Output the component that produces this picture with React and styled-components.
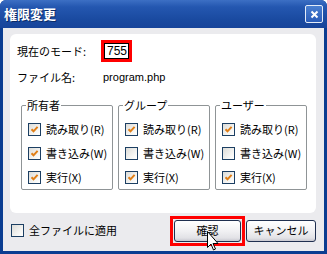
import React from "react"
import styled, { createGlobalStyle } from "styled-components"

const GlobalStyle = createGlobalStyle`
    html, body {
        margin: 0;
        padding: 0;
        background: #ffffff;
    }
    body {
        font-family: "Noto Sans CJK JP", "Liberation Sans", sans-serif;
        font-size: 11px;
        color: #000000;
    }
`

const Window = styled.div`
    position: relative;
    width: 327px;
    height: 254px;
    box-sizing: border-box;
    display: flex;
    flex-direction: column;
    background: #0b3d91;
    border-radius: 6px 6px 0 0;
    overflow: hidden;
`

const TitleBar = styled.div`
    height: 28px;
    flex: none;
    display: flex;
    align-items: center;
    justify-content: space-between;
    padding: 0 3px 0 4px;
    background: linear-gradient(#3c6fc4 0%, #2457b0 25%, #1a4aa0 70%, #17449a 100%);
`

const Title = styled.span`
    color: #ffffff;
    font-weight: bold;
    font-size: 13px;
    line-height: 14px;
    text-shadow: 1px 1px 0 #0a2a66;
`

const CloseButton = styled.div`
    width: 16px;
    height: 16px;
    margin-right: 1px;
    border: 1px solid #e4ecf8;
    border-radius: 2px;
    background: linear-gradient(#4a7fd0, #2a5cb8);
    display: flex;
    align-items: center;
    justify-content: center;
`

const Body = styled.div`
    flex: 1;
    margin: 0 3px 3px 3px;
    background: #ebebee;
    display: flex;
    flex-direction: column;
    padding: 6px 8px 0 7px;
`

const Panel = styled.div`
    height: 179px;
    box-sizing: border-box;
    background: #ffffff;
    border-radius: 6px;
    padding: 6px 10px 0 7px;
    display: flex;
    flex-direction: column;
`

const InfoRow = styled.div`
    display: flex;
    align-items: center;
    height: ${(p) => p.$h}px;
`

const Label = styled.span`
    width: 84px;
    line-height: 13px;
`

const ModeBox = styled.div`
    width: 31px;
    height: 22px;
    box-sizing: border-box;
    border: 3px solid #ff0000;
    display: flex;
`

const ModeInput = styled.div`
    flex: 1;
    border: 1px solid #000000;
    background: #ffffff;
    padding-left: 2px;
    line-height: 14px;
    font-size: 12px;
    font-family: "Liberation Sans", sans-serif;
`

const FileName = styled.span`
    margin-left: 2px;
    font-family: "Liberation Sans", sans-serif;
    font-size: 11px;
`

const Groups = styled.div`
    display: grid;
    grid-template-columns: 92px 92px 92px;
    column-gap: 5px;
    margin: 7px 0 0 4px;
`

const Group = styled.fieldset`
    margin: 0;
    height: 91px;
    box-sizing: border-box;
    border: 1px solid #8f9496;
    border-radius: 2px;
    padding: 5px 0 0 6px;
    display: flex;
    flex-direction: column;
    min-width: 0;
`

const Legend = styled.legend`
    padding: 0 1px;
    margin-left: -2px;
    line-height: 13px;
    font-size: 11px;
`

const CheckRow = styled.div`
    display: flex;
    align-items: center;
    gap: 5px;
    height: 25px;
    white-space: nowrap;
    line-height: 13px;
`

const Box = styled.span`
    width: 11px;
    height: 11px;
    flex: none;
    border: 1px solid #1c3f63;
    background: linear-gradient(135deg, #dcdcd8, #f7f7f5 70%, #ffffff);
    display: flex;
    align-items: center;
    justify-content: center;
`

const Footer = styled.div`
    flex: 1;
    display: flex;
    align-items: center;
    padding: 0 0 3px 1px;
`

const FooterCheck = styled(CheckRow)`
    flex: 1;
`

const RedFrame = styled.div`
    border: 3px solid #ff0000;
    padding: 1px;
    margin-right: 1px;
    display: flex;
`

const Button = styled.div`
    width: ${(p) => p.$w}px;
    height: 22px;
    box-sizing: border-box;
    border: 1px solid #1f2f4f;
    border-radius: 3px;
    background: linear-gradient(#ffffff 0%, #f1f1f3 50%, #e2e2e6 85%, #c8c8d0 100%);
    display: flex;
    align-items: center;
    justify-content: center;
    line-height: 13px;
    font-size: 11px;
`

const Cursor = styled.svg`
    position: absolute;
    left: 207px;
    top: 231px;
`

function CheckBox({ checked }) {
    return (
        <Box>
            {checked && (
                <svg width="9" height="9" viewBox="0 0 9 9">
                    <path d="M1.5 4.2 L3.5 6.3 L7.6 1.8" fill="none" stroke="#e07f18" strokeWidth="2" />
                </svg>
            )}
        </Box>
    )
}

const groups = [
    { title: "所有者", perms: [true, true, true] },
    { title: "グループ", perms: [true, false, true] },
    { title: "ユーザー", perms: [true, false, true] },
]

const permLabels = ["読み取り(R)", "書き込み(W)", "実行(X)"]

export default function App() {
    return (
        <Window>
            <GlobalStyle />
            <TitleBar>
                <Title>権限変更</Title>
                <CloseButton>
                    <svg width="9" height="9" viewBox="0 0 9 9">
                        <path d="M1.5 1.5 L7.5 7.5 M7.5 1.5 L1.5 7.5" stroke="#ffffff" strokeWidth="2" />
                    </svg>
                </CloseButton>
            </TitleBar>
            <Body>
                <Panel>
                    <InfoRow $h={22}>
                        <Label>現在のモード:</Label>
                        <ModeBox>
                            <ModeInput>755</ModeInput>
                        </ModeBox>
                    </InfoRow>
                    <InfoRow $h={30}>
                        <Label>ファイル名:</Label>
                        <FileName>program.php</FileName>
                    </InfoRow>
                    <Groups>
                        {groups.map((g) => (
                            <Group key={g.title}>
                                <Legend>{g.title}</Legend>
                                {permLabels.map((l, i) => (
                                    <CheckRow key={l}>
                                        <CheckBox checked={g.perms[i]} />
                                        <span>{l}</span>
                                    </CheckRow>
                                ))}
                            </Group>
                        ))}
                    </Groups>
                </Panel>
                <Footer>
                    <FooterCheck>
                        <CheckBox checked={false} />
                        <span>全ファイルに適用</span>
                    </FooterCheck>
                    <RedFrame>
                        <Button $w={67}>確認</Button>
                    </RedFrame>
                    <Button $w={70}>キャンセル</Button>
                </Footer>
            </Body>
            <Cursor width="12" height="23" viewBox="0 0 12 23">
                <path d="M0.5 0.5 L0.5 16.5 L4 13 L6.5 19 L8.5 18 L6 12.5 L11 12.5 Z" fill="#ffffff" stroke="#000000" strokeWidth="1" />
            </Cursor>
        </Window>
    )
}
